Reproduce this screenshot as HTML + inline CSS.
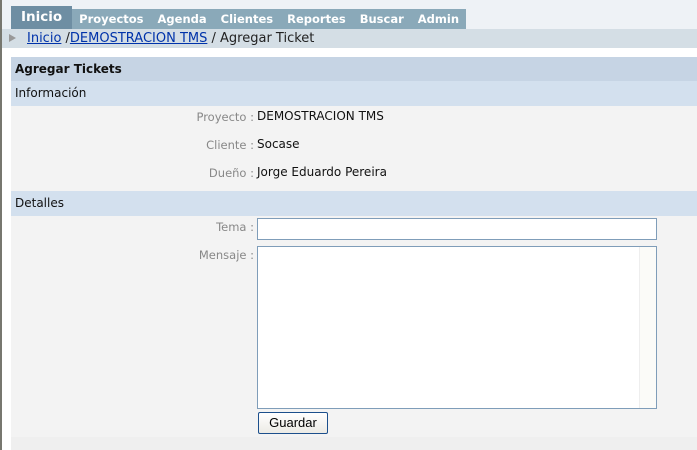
<!DOCTYPE html>
<html><head><meta charset="utf-8"><style>
body{margin:0;width:697px;height:450px;overflow:hidden;background:#fff;font-family:"DejaVu Sans","Liberation Sans",sans-serif;font-size:12px;position:relative}
.lb{position:absolute;left:0;top:0;width:2px;height:450px;background:#77776f}
.top{position:absolute;left:2px;top:0;right:0;height:29px;background:#eef2f6}
.nav{position:absolute;left:11px;top:9px;height:20px;display:flex}
.nav div{color:#fff;font-weight:bold;font-size:11.5px;background:#8aa9b9;padding:0 7px;line-height:20px}
.nav .a{background:#6e8ea3;font-size:13.5px;height:23px;margin-top:-3px;line-height:23px;padding:0 10px}
.bc{position:absolute;left:2px;top:29px;right:0;height:19px;background:#d4dee5;font-size:13px;line-height:19px;color:#222}
.bc a{color:#0033aa;text-decoration:underline}
.tri{position:absolute;left:7px;top:5px;width:0;height:0;border-left:7px solid #999;border-top:4px solid transparent;border-bottom:4px solid transparent}
.p{position:absolute;left:11px;right:0}
.h1{top:57px;height:24px;background:#c6d4e4;font-weight:bold;line-height:24px;padding-left:4px;color:#111}
.h2{height:25px;background:#d3e0ee;line-height:25px;padding-left:4px;color:#111}
.c{background:#f3f3f3}
.l{position:absolute;right:443px;color:#888;font-size:11.5px;text-align:right}
.v{position:absolute;left:246px;color:#111}
.in{position:absolute;left:246px;width:398px;border:1px solid #7f9db9;background:#fff}
</style></head><body>
<div class="lb"></div>
<div class="top"><div class="nav" style="left:9px"><div class="a">Inicio</div><div>Proyectos</div><div>Agenda</div><div>Clientes</div><div>Reportes</div><div>Buscar</div><div>Admin</div></div></div>
<div class="bc"><div class="tri"></div><span style="position:absolute;left:25px"><a>Inicio</a> /<a>DEMOSTRACION TMS</a> / Agregar Ticket</span></div>
<div class="p h1">Agregar Tickets</div>
<div class="p h2" style="top:81px">Información</div>
<div class="p c" style="top:106px;height:85px">
<div class="l" style="top:4px">Proyecto :</div><div class="v" style="top:3px">DEMOSTRACION TMS</div>
<div class="l" style="top:32px">Cliente :</div><div class="v" style="top:31px">Socase</div>
<div class="l" style="top:60px">Dueño :</div><div class="v" style="top:59px">Jorge Eduardo Pereira</div>
</div>
<div class="p h2" style="top:191px">Detalles</div>
<div class="p c" style="top:216px;height:221px">
<div class="l" style="top:4px">Tema :</div><div class="in" style="top:2px;height:20px"></div>
<div class="l" style="top:32px">Mensaje :</div><div class="in" style="top:30px;height:161px"><div style="position:absolute;right:0;top:0;width:16px;height:161px;background:#fbfbf8;border-left:1px solid #eee"></div></div>
<div style="position:absolute;left:247px;top:196px;width:68px;height:20px;border:1px solid #1c4f8c;border-radius:2px;background:linear-gradient(#fff,#ecebe5);font-family:'Liberation Sans',sans-serif;font-size:13px;text-align:center;line-height:20px">Guardar</div>
</div>
<div class="p" style="top:437px;height:13px;background:#efefef"></div>
</body></html>
